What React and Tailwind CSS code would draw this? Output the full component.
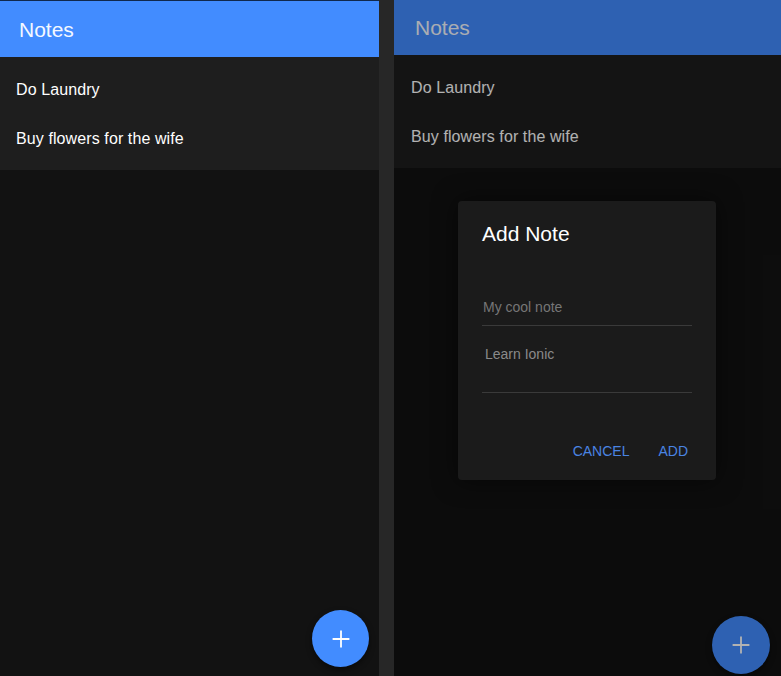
import React from "react";

function Plus() {
  return (
    <svg width="18" height="18" viewBox="0 0 18 18" fill="none">
      <path d="M9 1.5V16.5M1.5 9H16.5" stroke="white" strokeWidth="1.8" strokeLinecap="square" />
    </svg>
  );
}

function NotesList({ right }) {
  return (
    <div className="bg-[#1e1e1e] pt-[8px] pb-[7px]">
      {["Do Laundry", "Buy flowers for the wife"].map((t) => (
        <div
          key={t}
          className={`h-[49px] flex items-center text-[16px] tracking-[0.1px] text-white ${right ? "pl-[17px]" : "pl-[16px]"}`}
        >
          {t}
        </div>
      ))}
    </div>
  );
}

export default function App() {
  return (
    <div
      className="w-[781px] h-[676px] flex bg-[#272727] overflow-hidden"
      style={{ fontFamily: '"Liberation Sans", Arial, sans-serif' }}
    >
      {/* Left panel */}
      <div className="relative w-[379px] h-full bg-[#121212] flex flex-col border-t border-[#10284d]">
        <div className="h-[56px] bg-[#428cff] flex items-center pl-[19px] pt-[2px] text-[21px] text-[#f4f8ff]">
          Notes
        </div>
        <NotesList />
        <button className="absolute right-[10px] bottom-[9px] w-[57px] h-[57px] rounded-full bg-[#428cff] flex items-center justify-center shadow-[0_3px_6px_rgba(0,0,0,0.45)]">
          <Plus />
        </button>
      </div>

      {/* Right panel */}
      <div className="relative ml-[15px] flex-1 h-full bg-[#121212] flex flex-col">
        <div className="h-[55px] bg-[#428cff] flex items-center pl-[21px] text-[21px] text-[#f4f8ff]">
          Notes
        </div>
        <NotesList right />
        <button className="absolute right-[11px] bottom-[2px] w-[58px] h-[58px] rounded-full bg-[#428cff] flex items-center justify-center shadow-[0_3px_6px_rgba(0,0,0,0.45)]">
          <Plus />
        </button>

        {/* Backdrop */}
        <div className="absolute inset-0 bg-black/30" />

        {/* Modal */}
        <div className="absolute left-[64px] top-[201px] w-[258px] h-[279px] rounded-[4px] bg-[#1b1b1b] shadow-[0_0_24px_rgba(0,0,0,0.55)] flex flex-col px-[24px] pt-[20px]">
          <div className="text-[21px] leading-[26px] text-white">Add Note</div>
          <div className="mt-[43px] h-[36px] border-b border-[#3a3a3a] flex items-center pl-[1px] text-[14px] text-[#767676]">
            My cool note
          </div>
          <div className="h-[67px] border-b border-[#3a3a3a] pt-[20px] pl-[3px] text-[14px] leading-[16px] text-[#8a8a8a]">
            Learn Ionic
          </div>
          <div className="mt-[40px] h-[36px] flex items-center justify-end gap-[29px] pr-[4px] text-[14px] text-[#4a84e2]">
            <span>CANCEL</span>
            <span>ADD</span>
          </div>
        </div>
      </div>
    </div>
  );
}
